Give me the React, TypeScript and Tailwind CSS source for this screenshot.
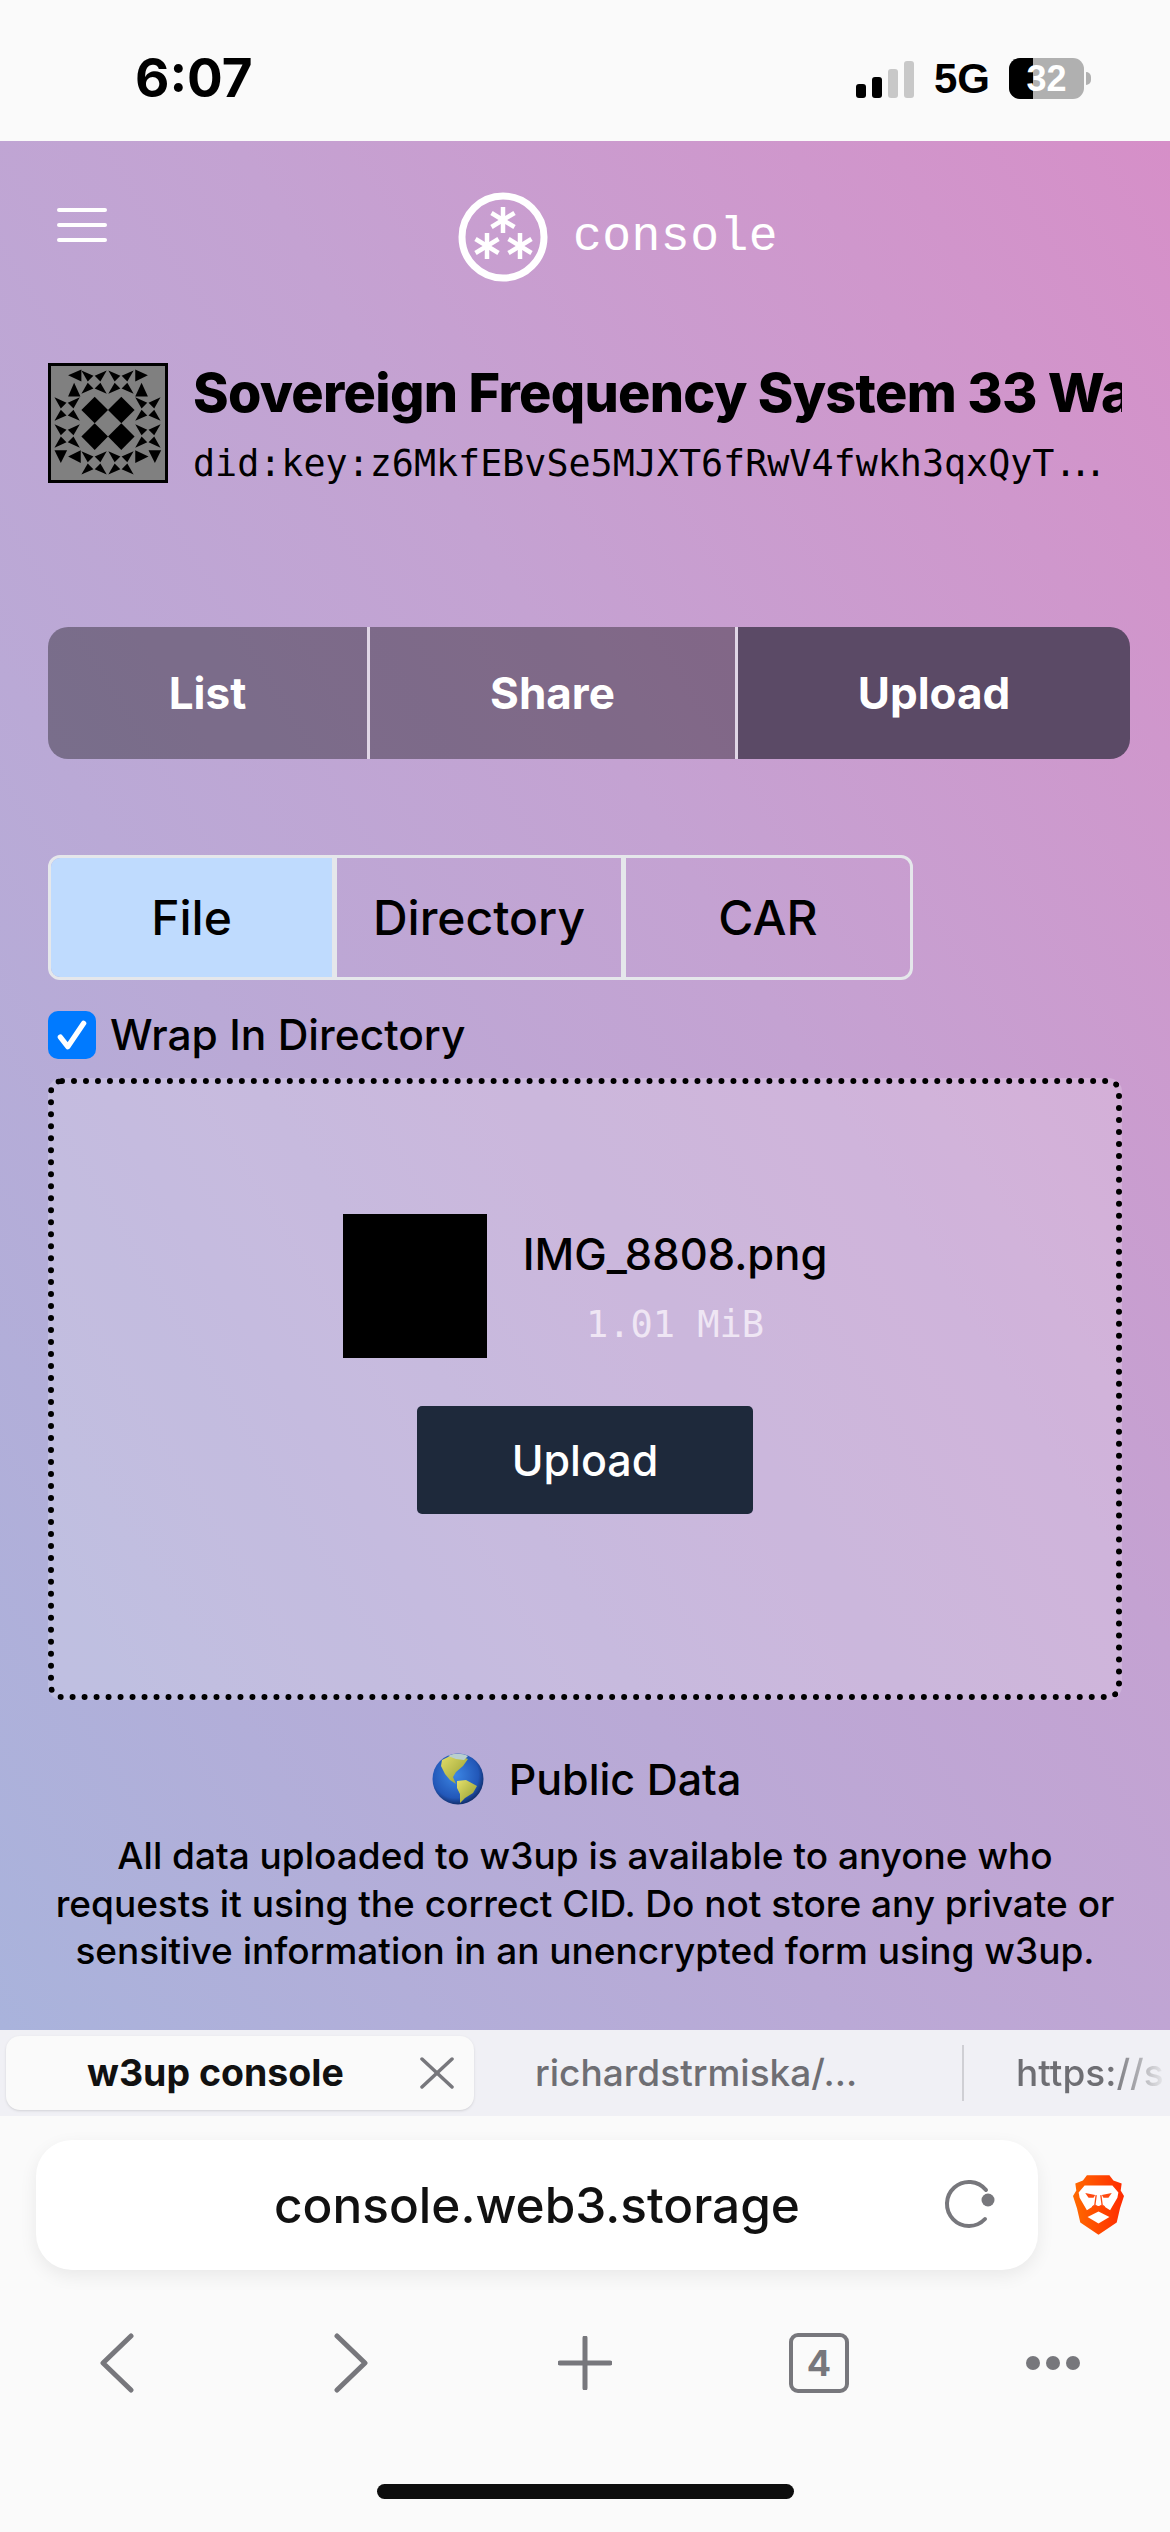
const STAR_CENTERS = [
  [190, 120], [275, 120], [105, 205], [105, 290], [360, 205], [360, 290], [190, 375], [275, 375],
];

function Identicon() {
  const arms: string[] = [];
  for (const [cx, cy] of STAR_CENTERS) {
    for (const [dx, dy] of [[-1, -1], [1, -1], [-1, 1], [1, 1]]) {
      arms.push(`${cx + dx * 40},${cy + dy * 37} ${cx + dx * 20},${cy + dy * 2} ${cx + dx * 2},${cy + dy * 20}`);
    }
  }
  return (
    <svg viewBox="54 70 360 358" className="w-[120px] h-[120px] shrink-0 bg-[#808080] border-[3px] border-black">
      {arms.map((p, i) => <polygon key={i} points={p} fill="#000" />)}
      <polygon points="192,166 234,208 192,250 150,208" fill="#000" />
      <polygon points="276,166 318,208 276,250 234,208" fill="#000" />
      <polygon points="192,250 234,292 192,334 150,292" fill="#000" />
      <polygon points="276,250 318,292 276,334 234,292" fill="#000" />
      <polygon points="108,98 150,80 150,118" fill="#000" />
      <polygon points="127,122 108,165 147,165" fill="#000" />
      <polygon points="360,98 320,80 320,118" fill="#000" />
      <polygon points="340,122 320,165 360,165" fill="#000" />
      <polygon points="65,335 105,335 85,375" fill="#000" />
      <polygon points="108,355 148,335 148,375" fill="#000" />
      <polygon points="362,355 320,335 320,375" fill="#000" />
      <polygon points="362,335 402,335 382,375" fill="#000" />
    </svg>
  );
}

function Asterisk({ x, y }: { x: number; y: number }) {
  return (
    <g transform={`translate(${x} ${y})`} stroke="#fff" strokeWidth="4.5">
      <line x1="0" y1="-13" x2="0" y2="13" />
      <line x1="-11.5" y1="-7" x2="11.5" y2="7" />
      <line x1="-11.5" y1="7" x2="11.5" y2="-7" />
    </g>
  );
}

function Logo() {
  return (
    <svg viewBox="0 0 90 90" className="w-[90px] h-[90px]">
      <circle cx="45" cy="45" r="41" fill="none" stroke="#fff" strokeWidth="7" />
      <Asterisk x={45} y={28} />
      <Asterisk x={29} y={54} />
      <Asterisk x={62} y={54} />
    </svg>
  );
}

function Globe() {
  return (
    <svg viewBox="0 0 52 52" className="w-[52px] h-[52px]">
      <defs>
        <radialGradient id="ocean" cx="45%" cy="42%" r="58%">
          <stop offset="0%" stopColor="#3c86e4" />
          <stop offset="78%" stopColor="#2257b8" />
          <stop offset="100%" stopColor="#12306f" />
        </radialGradient>
        <linearGradient id="land" x1="0" y1="0" x2="1" y2="1">
          <stop offset="0%" stopColor="#e6e06a" />
          <stop offset="100%" stopColor="#8f9a30" />
        </linearGradient>
      </defs>
      <circle cx="26" cy="26" r="25.5" fill="url(#ocean)" />
      <path d="M10 7 L22 1 L36 6 L31 13 L24 19 L21 24 L24 31 L18 27 L13 21 L9 13 Z" fill="url(#land)" />
      <path d="M25 28 L34 27 L45 33 L41 40 L33 45 L28 50 L28 41 L25 35 Z" fill="url(#land)" />
      <path d="M16 3 C22 0 30 0 36 3 L32 7 L24 6 Z" fill="#b9cfcf" />
    </svg>
  );
}

function BraveLion() {
  return (
    <svg viewBox="518 172 154 180" className="w-[51px] h-[60px]">
      <defs>
        <linearGradient id="brave" x1="0" y1="0" x2="1" y2="0">
          <stop offset="0%" stopColor="#ff6a00" />
          <stop offset="100%" stopColor="#ff2a00" />
        </linearGradient>
      </defs>
      <polygon
        points="560,172 628,172 640,188 665,197 662,218 672,235 660,272 650,315 595,352 540,315 530,272 518,235 528,218 525,197 548,188"
        fill="url(#brave)"
      />
      <path
        d="M553 203 L637 203 L655 224 L652 240 L630 278 L610 265 L580 265 L560 278 L538 240 L535 224 Z"
        fill="#fff"
      />
      <polygon points="562,298 595,282 628,298 595,318" fill="#fff" />
      <polygon points="555,226 585,232 580,240 565,240" fill="#ff4a10" />
      <polygon points="635,226 605,232 610,240 625,240" fill="#ff4a10" />
      <path d="M588 232 L584 262 L576 268 M602 232 L606 262 L614 268 M584 262 L595 268 L606 262" fill="none" stroke="#ff4a10" strokeWidth="4" />
    </svg>
  );
}

function StatusBar() {
  return (
    <div className="h-[141px] shrink-0 bg-[#fafafa] flex items-start justify-between pl-[135px] pr-[79px] pt-[48px]">
      <div className="font-bold text-[53px] leading-[60px] text-black">6:07</div>
      <div className="flex items-center h-[60px] pt-[1px]">
        <div className="flex items-end gap-[6px] h-[38px]">
          <div className="w-[10px] h-[14px] rounded-[3px] bg-black" />
          <div className="w-[10px] h-[21px] rounded-[3px] bg-black" />
          <div className="w-[10px] h-[29px] rounded-[3px] bg-[#c8c8c8]" />
          <div className="w-[10px] h-[37px] rounded-[3px] bg-[#c8c8c8]" />
        </div>
        <div className="ml-[20px] font-['Liberation_Sans',sans-serif] font-bold text-[42px] leading-none text-black">5G</div>
        <div className="relative ml-[19px] w-[75px] h-[41px] rounded-[11px] bg-[#b0b0b0] overflow-hidden flex items-center justify-center">
          <div className="absolute left-0 top-0 bottom-0 w-[24px] bg-black" />
          <span className="relative font-['Liberation_Sans',sans-serif] font-bold text-[36px] leading-none text-white">32</span>
        </div>
        <div className="ml-[2px] w-[5px] h-[13px] rounded-r-full bg-[#b0b0b0]" />
      </div>
    </div>
  );
}

function Header() {
  return (
    <div className="relative h-[137px] flex items-center justify-center pl-[66px]">
      <div className="absolute left-[57px] top-[67px] w-[50px] flex flex-col gap-[11px]">
        <div className="h-[4px] rounded-full bg-white" />
        <div className="h-[4px] rounded-full bg-white" />
        <div className="h-[4px] rounded-full bg-white" />
      </div>
      <div className="flex items-center mt-[55px] gap-[25px]">
        <Logo />
        <span className="font-['Liberation_Mono',monospace] text-[48px] leading-none text-white tracking-[0.5px]">console</span>
      </div>
    </div>
  );
}

function SpaceInfo() {
  return (
    <div className="flex items-center gap-[25px] h-[120px] mt-[85px] pl-[48px] pr-[48px]">
      <Identicon />
      <div className="min-w-0 flex-1">
        <div className="text-[54px] leading-[66px] font-extrabold tracking-[-0.7px] text-black whitespace-nowrap overflow-hidden">
          Sovereign Frequency System 33 Wave
        </div>
        <div className="mt-[16px] font-['DejaVu_Sans_Mono',monospace] text-[36.7px] leading-[44px] text-black whitespace-nowrap">
          did:key:z6MkfEBvSe5MJXT6fRwV4fwkh3qxQyT<span className="tracking-[-7px]">...</span>
        </div>
      </div>
    </div>
  );
}

function MainTabs() {
  return (
    <div className="flex ml-[48px] mr-[40px] mt-[144px] h-[132px] rounded-[20px] overflow-hidden text-white text-[44px] font-bold divide-x-[3px] divide-[#e0d6e6]">
      <div className="w-[322px] bg-black/35 flex items-center justify-center">List</div>
      <div className="w-[368px] bg-black/35 flex items-center justify-center">Share</div>
      <div className="flex-1 bg-[#5b4a66] flex items-center justify-center">Upload</div>
    </div>
  );
}

function FileTabs() {
  return (
    <div className="flex w-[865px] h-[125px] mx-[48px] mt-[96px] rounded-[12px] overflow-hidden border-[3px] border-[#e5e7eb] divide-x-[5px] divide-[#e5e7eb] text-[48px] font-medium text-black">
      <div className="w-[286px] bg-[#bfdbfe] flex items-center justify-center">File</div>
      <div className="w-[289px] flex items-center justify-center">Directory</div>
      <div className="flex-1 flex items-center justify-center">CAR</div>
    </div>
  );
}

function UploadPanel() {
  return (
    <div className="mx-[48px] mr-[48px] mt-[19px] h-[622px] rounded-[14px] border-[6px] border-dotted border-black bg-white/20 flex flex-col items-center pt-[130px]">
      <div className="flex items-center gap-[36px]">
        <div className="w-[144px] h-[144px] bg-black" />
        <div className="flex flex-col items-center">
          <div className="text-[43.5px] leading-[50px] font-medium text-black mt-[2px]">IMG_8808.png</div>
          <div className="mt-[26px] font-['DejaVu_Sans_Mono',monospace] text-[37px] leading-[40px] text-[#efe6f4]">1.01 MiB</div>
        </div>
      </div>
      <div className="mt-[48px] w-[336px] h-[108px] rounded-[5px] bg-[#1e293b] text-white text-[43px] font-medium flex items-center justify-center">
        Upload
      </div>
    </div>
  );
}

function PublicNote() {
  return (
    <div className="mt-[52px] flex flex-col items-center text-black">
      <div className="flex items-center gap-[25px] h-[54px] pl-[3px]">
        <Globe />
        <span className="text-[43px] font-medium">Public Data</span>
      </div>
      <p className="mt-[26px] text-[37px] leading-[47.5px] font-medium text-center whitespace-nowrap">
        All data uploaded to w3up is available to anyone who
        <br />
        requests it using the correct CID. Do not store any private or
        <br />
        sensitive information in an unencrypted form using w3up.
      </p>
    </div>
  );
}

function BrowserTabs() {
  return (
    <div className="h-[86px] shrink-0 bg-[#f0f0f5] flex items-center overflow-hidden text-[37px]">
      <div className="ml-[6px] w-[468px] h-[74px] rounded-[14px] bg-[#fafafa] shadow-sm flex items-center pl-[81px] pr-[20px] justify-between shrink-0">
        <span className="font-bold text-[#111] text-[37.5px]">w3up console</span>
        <svg viewBox="0 0 34 32" className="w-[34px] h-[32px]" fill="none" stroke="#77777c" strokeWidth="3.5" strokeLinecap="round">
          <line x1="2" y1="2" x2="32" y2="30" />
          <line x1="32" y1="2" x2="2" y2="30" />
        </svg>
      </div>
      <div className="ml-[61px] w-[327px] font-medium text-[#6e6e73] whitespace-nowrap shrink-0">richardstrmiska/...</div>
      <div className="ml-[100px] w-[2px] h-[56px] bg-[#cfcfd4] shrink-0" />
      <div className="ml-[52px] font-medium whitespace-nowrap shrink-0 bg-linear-to-r from-[#6e6e73] from-60% to-[#e6e6ea] to-95% bg-clip-text text-transparent w-[155px] overflow-hidden">
        https://s
      </div>
    </div>
  );
}

function AddressBar() {
  return (
    <div className="flex items-center pl-[36px] pt-[24px]">
      <div className="relative w-[1002px] h-[130px] rounded-[36px] bg-white shadow-[0_6px_18px_rgba(0,0,0,0.07)] flex items-center justify-center">
        <span className="text-[49.5px] font-medium text-[#111]">console.web3.storage</span>
        <svg viewBox="0 0 56 56" className="absolute right-[40px] top-[37px] w-[56px] h-[56px]" fill="none">
          <path d="M44 13 A22 22 0 1 0 43 42" stroke="#77777c" strokeWidth="4" strokeLinecap="round" />
          <circle cx="46" cy="23" r="6.5" fill="#77777c" />
        </svg>
      </div>
      <div className="ml-[35px]">
        <BraveLion />
      </div>
    </div>
  );
}

function ToolbarIcons() {
  return (
    <div className="grid grid-cols-5 h-[60px] mt-[63px] place-items-center">
      <svg viewBox="0 0 34 60" className="w-[34px] h-[60px]" fill="none" stroke="#77777c" strokeWidth="5" strokeLinecap="round" strokeLinejoin="round">
        <polyline points="31,3 3,30 31,57" />
      </svg>
      <svg viewBox="0 0 34 60" className="w-[34px] h-[60px]" fill="none" stroke="#77777c" strokeWidth="5" strokeLinecap="round" strokeLinejoin="round">
        <polyline points="3,3 31,30 3,57" />
      </svg>
      <svg viewBox="0 0 54 54" className="w-[54px] h-[54px]" fill="none" stroke="#77777c" strokeWidth="5" strokeLinecap="round">
        <line x1="27" y1="2" x2="27" y2="52" />
        <line x1="2" y1="27" x2="52" y2="27" />
      </svg>
      <div className="w-[60px] h-[60px] rounded-[9px] border-[4px] border-[#77777c] flex items-center justify-center font-bold text-[36px] text-[#77777c]">
        4
      </div>
      <div className="flex gap-[6px]">
        <div className="w-[14px] h-[14px] rounded-full bg-[#77777c]" />
        <div className="w-[14px] h-[14px] rounded-full bg-[#77777c]" />
        <div className="w-[14px] h-[14px] rounded-full bg-[#77777c]" />
      </div>
    </div>
  );
}

export default function App() {
  return (
    <div className="w-[1170px] h-[2532px] flex flex-col overflow-hidden font-['Inter',sans-serif]">
      <StatusBar />
      <main className="flex-1 min-h-0 bg-linear-to-tr from-[#a9b3dc] via-[#c4a2d2] via-60% to-[#d68fc8]">
        <Header />
        <SpaceInfo />
        <MainTabs />
        <FileTabs />
        <div className="flex items-center gap-[14px] mx-[48px] mt-[31px] h-[48px]">
          <div className="w-[48px] h-[48px] rounded-[10px] bg-[#007aff] flex items-center justify-center">
            <svg viewBox="0 0 34 34" className="w-[36px] h-[36px]" fill="none" stroke="#fff" strokeWidth="5" strokeLinecap="round" strokeLinejoin="round">
              <polyline points="6,19 13,28 28,6" />
            </svg>
          </div>
          <span className="text-[42.5px] leading-none font-medium text-black">Wrap In Directory</span>
        </div>
        <UploadPanel />
        <PublicNote />
      </main>
      <BrowserTabs />
      <div className="h-[416px] shrink-0 bg-[#fafafa] flex flex-col">
        <AddressBar />
        <ToolbarIcons />
        <div className="mt-auto mb-[33px] mx-auto w-[417px] h-[15px] rounded-full bg-[#0d0d0d]" />
      </div>
    </div>
  );
}
